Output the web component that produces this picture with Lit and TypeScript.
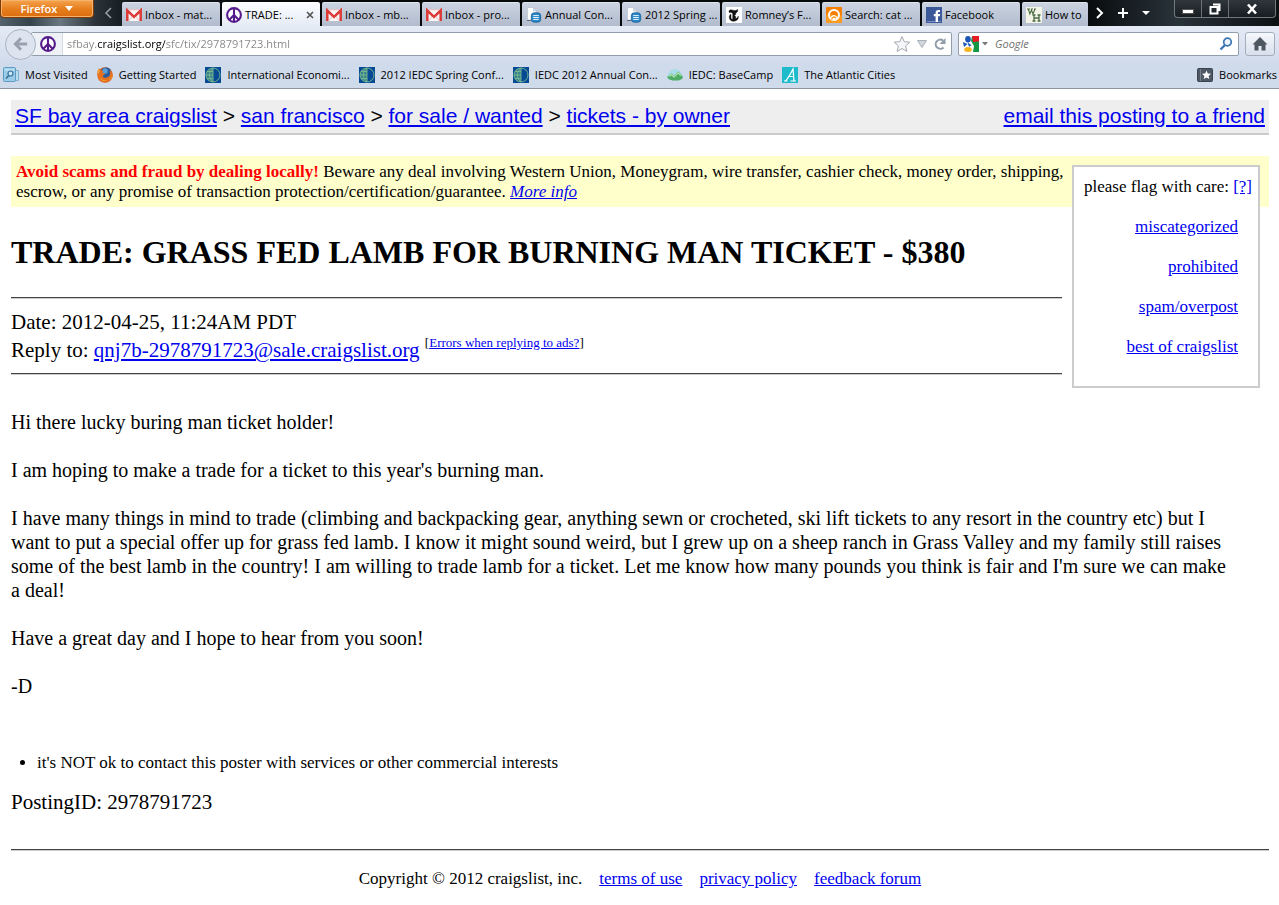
import { LitElement, html, css, svg, TemplateResult } from "lit";
import { customElement } from "lit/decorators.js";
import { classMap } from "lit/directives/class-map.js";

const icon = (body: unknown, size = 16) =>
  html`<svg class="icon" width=${size} height=${size} viewBox="0 0 16 16" aria-hidden="true">${body}</svg>`;

const gmail = icon(svg`<rect x="1" y="2.500" width="14" height="11.500" fill="#fdf6f5"/>
  <path d="M3 13.500 6.500 9M13 13.500 9.500 9" stroke="#d8b9b9" stroke-width=".8"/>
  <path d="M1.300 14V3.500L8 9.800l6.700-6.300V14" fill="none" stroke="#db3a37" stroke-width="2.500"/>
  <path d="M2.500 2.700h11" stroke="#edb2af" stroke-width=".8"/>`);
const peace = icon(svg`<circle cx="8" cy="8" r="6.900" fill="#fff" stroke="#551a8b" stroke-width="2.100"/>
  <path d="M8 1v14M8 8l-4.900 4.900M8 8l4.900 4.900" stroke="#551a8b" stroke-width="2.100" fill="none"/>`);
const docs = icon(svg`<path d="M1.500.5h6l3 3.500v9h-9z" fill="#fff" stroke="#c3ccd8"/>
  <path d="M7.500.5V4h3z" fill="#d9e0e8" stroke="#b5c0ce" stroke-width=".6"/><path d="M1 13.500h4" stroke="#5b6a7c"/>
  <rect x="5.300" y="5.800" width="9.400" height="9.400" rx="3" fill="#2a86c4" stroke="#155f99" stroke-width=".8"/>
  <path d="M7.200 8.600h5.600M7.200 10.500h5.600M7.200 12.400h5.600" stroke="#e5f4ff"/>`);
const nyt = icon(svg`<rect width="16" height="16" fill="#fff"/>
  <path d="M3.500 3.300c1.500-1.700 3.900.6 6 .2 1-.2 1.800-.7 2-1.300.7 1.900-.2 3.300-1.800 3.700v1.800l-1.500.9 1.500.8v2.300c1.200-.3 2-1.200 2.600-2.600.5 3-1.500 5.200-4.500 5.200C4.800 14.300 3 12.200 3.300 9.500c.1-1 .7-1.900 1.700-2.300v4c.3.700.9 1.100 1.700 1.300V6.200C5.500 5.800 5 5 4.900 4.900c-.7.100-.8.600-.5 1.100C2.600 5.500 2.600 4.300 3.500 3.300z" fill="#111" stroke="#111" stroke-width=".4"/>`);
const groove = icon(svg`<rect width="16" height="16" rx="1" fill="#f77f00"/>
  <path d="M0 8c5-3 11 3 16 0v7q0 1-1 1H1q-1 0-1-1z" fill="#ff9b22"/>
  <circle cx="8" cy="8" r="5" fill="none" stroke="#fff" stroke-width="2"/>
  <path d="M4 11.500c1.500-4 5-5 8-.5l-1.500 2h-5z" fill="#fff"/>
  <path d="M5.500 12.500c.8-2.500 2.500-3.500 4.500-1.300" fill="none" stroke="#ff9b22" stroke-width="1.300"/>`);
const facebook = icon(svg`<rect width="16" height="16" fill="#3b5998"/><path d="M1 14.500h14" stroke="#7690c5"/>
  <path d="M14 3h-1.700c-1.800 0-2.700 1-2.700 2.700V7H7.800v2.200h1.800V15H12V9.200h1.800L14.200 7H12V6c0-.6.300-1 1-1h1z" fill="#fff"/>`);
const wikihow = icon(svg`<rect width="16" height="16" fill="#f3f5e9"/>
  <path d="M1 2h3M5 2h2M8 2h2M2.300 2l1.600 5 1.600-4 1.500 4L9 2" fill="none" stroke="#4c6b43" stroke-width="1.100"/>
  <path d="M6.500 8h3M11.500 8h3M6.500 14h3M11.500 14h3M8 8v6M13 8v6M8 11h5" fill="none" stroke="#4c6b43" stroke-width="1.300"/>`);
const visited = icon(svg`<path d="M4 3.500h11.500v10H4z" fill="#b9dcef" stroke="#7db2d2"/>
  <rect x=".5" y=".5" width="12" height="14" rx="1" fill="#9bcbe6" stroke="#5b9bc4"/>
  <rect x="1.500" y="1.500" width="10" height="2.500" fill="#b7dcf0"/>
  <circle cx="7.500" cy="6.500" r="2.500" fill="#c9e6f5" stroke="#34739d" stroke-width="1.200"/>
  <path d="M5.700 8.600 3 11.500" stroke="#34739d" stroke-width="1.700"/>`);
const firefox = icon(svg`<circle cx="8" cy="8" r="7.700" fill="#dd5f18"/>
  <path d="M4 3c2-3 7-3.300 9.500-.5 1.500 2 1.500 5.500-.5 7.500-2.500 1.500-6 1.500-7.500-.5z" fill="#2b5c9e"/>
  <circle cx="8" cy="4" r="2.700" fill="#5a9fd6"/>
  <path d="M.4 4.500 2 1.300l1.200 2c1.500-.4 2.500 0 3 .6L5.200 5.700l2.900.9C7.700 8 6 8 5.600 9.200c1 2 4 2 6.300 0 1.500-1.500 1.500-4.500.6-6.500 3.500 2 3.800 6 2.300 9-3 4.500-10.500 4.500-13.500.5z" fill="#e5701d"/>
  <path d="M15.500 6c.3 5-2.800 8-6.900 7.800-3-.1-5-1.700-6-3.700 1 4 6.500 5.400 10 2.400 2-1.700 3-4 2.900-6.500z" fill="#fbc745"/>
  <path d="m.4 5 1.500-3L3 4.100 1.300 7z" fill="#f3a536"/>`);
const globe = icon(svg`<rect width="16" height="16" fill="#064a94"/><path d="M8 1a7 7 0 0 0 0 14z" fill="#37818a"/>
  <path d="M8 1a7 7 0 1 0 0 14M8 1a7 7 0 1 1 0 14M8 1C3.200 5 3.200 11 8 15M1 8h7M2 4.500h6M2 11.500h6M8 1v14" fill="none" stroke="#7cba90" stroke-width=".9"/>`);
const basecamp = icon(svg`<path d="M0 11C.3 6 4 2 8 2s7.700 4 8 9z" fill="#a9dcea"/>
  <path d="M.3 10 4.500 6.500 7 8.800l4.500-4.300 4.200 5.200c1.200 5-14.800 5.300-15.400.3z" fill="#4eac67"/>
  <path d="m2 9.300 2.600-1.500L7 10l4.500-4.200 2.300 3" fill="none" stroke="#b7e4af" stroke-width="1.100"/>`);
const atlantic = icon(svg`<rect width="16" height="16" fill="#1ebccb"/>
  <path d="M2 14h3.500M8.500 14H14M3.500 14c3-3 5.500-8 7.500-12l1 12M6 9.500h5.500" fill="none" stroke="#fff" stroke-width="1.200"/>`);
const google = icon(svg`<path d="M7 0h9v16H7z" fill="#149846"/><path d="M9 0h7v5.500L10 6z" fill="#e71b23"/>
  <path d="M0 0h9l-1 5 3 5-1 6H0z" fill="#fff"/><ellipse cx="5" cy="3.200" rx="2.800" ry="3.200" fill="#1b55b5"/>
  <path d="m0 6 4.500 2L1 11z" fill="#1b55b5"/><path d="m4.500 6.300 4 3-2.500 1.500z" fill="#1b55b5"/>
  <ellipse cx="5" cy="13.400" rx="3.800" ry="2.500" fill="#f6b51a"/>`);
const starBox = icon(svg`<rect x=".5" y="1.500" width="15" height="13" rx="1" fill="#4f5966" stroke="#39424d"/>
  <path d="M3.500 2v12" stroke="#77818e"/>
  <path d="m9.500 3.500 1.300 3 3.200.3-2.400 2.100.7 3.200-2.800-1.700-2.800 1.700.7-3.200L5 6.800l3.200-.3z" fill="#fff"/>`);

const tabs: { label: string; icon: TemplateResult; active?: boolean; cut?: boolean }[] = [
  { label: "Inbox - mat...", icon: gmail },
  { label: "TRADE: ...", icon: peace, active: true },
  { label: "Inbox - mb...", icon: gmail },
  { label: "Inbox - pro...", icon: gmail },
  { label: "Annual Con...", icon: docs },
  { label: "2012 Spring ...", icon: docs },
  { label: "Romney’s F...", icon: nyt },
  { label: "Search: cat ...", icon: groove },
  { label: "Facebook", icon: facebook },
  { label: "How to", icon: wikihow, cut: true },
];

const bookmarks = [
  { label: "Most Visited", icon: visited },
  { label: "Getting Started", icon: firefox },
  { label: "International Economi...", icon: globe },
  { label: "2012 IEDC Spring Conf...", icon: globe },
  { label: "IEDC 2012 Annual Con...", icon: globe },
  { label: "IEDC: BaseCamp", icon: basecamp },
  { label: "The Atlantic Cities", icon: atlantic },
];

@customElement("browser-chrome")
export class BrowserChrome extends LitElement {
  static styles = css`
    :host { display: block; font: 11px/16px "Open Sans", "Noto Sans", sans-serif; color: #000; }
    button, input { font: inherit; color: inherit; padding: 0; margin: 0; border: 0; background: none; }
    svg { display: block; flex: none; }
    .titlebar {
      display: flex; height: 26px; overflow: hidden;
      background: linear-gradient(90deg, #55636e 0, #34424c 30px, #6b7881 60px, #2b343a 95px, #151b1f 125px, #050708 300px, #080b0d 85%, #29333a 92%, #0b1012);
    }
    .menu {
      box-sizing: border-box; width: 94px; height: 18px; flex: none; display: flex; gap: 8px; align-items: center; justify-content: center;
      color: #fff; font-weight: 600; border: 1px solid #7d3a08; border-top: 0; border-radius: 0 0 4px 4px;
      background: linear-gradient(#f5a450, #e57d1c 55%, #dc6d10); box-shadow: inset 0 0 0 1px #f6b36c;
    }
    .scroll { width: 28px; flex: none; display: grid; place-items: center; }
    .tabs { display: flex; gap: 2px; padding-top: 2px; flex: none; }
    .tab {
      box-sizing: border-box; width: 98px; height: 24px; display: flex; align-items: center; padding: 0 4px; overflow: hidden;
      background: linear-gradient(#cbd3e1, #b2bccd); border-top: 1px solid #dfe5ef; border-radius: 2px 2px 0 0;
    }
    .tab.active { background: linear-gradient(#fbfcfe, #e5ebf5); border-color: #fff; }
    .tab.cut { width: 66px; }
    .pick { display: flex; align-items: center; gap: 3px; flex: 1; white-space: nowrap; }
    .close { flex: none; width: 12px; height: 12px; }
    .actions { display: flex; align-items: center; gap: 11px; padding-left: 6px; }
    .window { display: flex; height: 18px; margin-left: auto; margin-right: 3px; border: 1px solid #71797e; border-top: 0; border-radius: 0 0 4px 4px; box-sizing: border-box;
      background: linear-gradient(#30373c, #171d21); }
    .window button { width: 27px; display: grid; place-items: center; border-right: 1px solid #6b7378; }
    .window button:last-child { width: 46px; border: 0; }
    .nav { display: flex; align-items: center; height: 36px; padding: 0 4px 0 5px; background: linear-gradient(#e5ebf5, #d2dced); }
    .back {
      box-sizing: border-box; width: 31px; height: 31px; flex: none; border: 1px solid #a9b3c2; border-radius: 50%; display: grid; place-items: center;
      background: #dde4ef; margin-right: -5px; z-index: 1;
    }
    .field { box-sizing: border-box; height: 24px; display: flex; align-items: center; background: #fff; border: 1px solid #929dab; border-radius: 2px; }
    .address { flex: 1; padding-right: 4px; gap: 6px; }
    .site { align-self: stretch; width: 31px; display: grid; place-items: center; padding-left: 2px; box-sizing: border-box; background: #eef1f6; border-right: 1px solid #d4dae3; }
    .url {
      flex: 1; min-width: 0; outline: 0; color: transparent; margin-left: -2px;
      background: linear-gradient(90deg, #858585 31px, #000 31px, #000 98px, #858585 98px); -webkit-background-clip: text; background-clip: text;
    }
    .search { width: 281px; margin: 0 6px; padding: 0 5px 0 4px; gap: 3px; }
    .search input { flex: 1; min-width: 0; outline: 0; font-style: italic; margin-left: 4px; }
    .search input::placeholder { color: #707070; opacity: 1; }
    .home { box-sizing: border-box; width: 30px; height: 24px; flex: none; display: grid; place-items: center; border: 1px solid #a4aebc; border-radius: 3px; background: linear-gradient(#f5f8fc, #d8e0ec); }
    .bookmarks { display: flex; align-items: center; height: 27px; box-sizing: border-box; padding: 0 2px 0 3px; gap: 9px; background: #cfdaea; border-bottom: 1px solid #8f959d; }
    .bookmarks button { display: flex; align-items: center; gap: 6px; white-space: nowrap; }
    .bookmarks .last { margin-left: auto; }
  `;

  render() {
    return html`
      <div class="titlebar">
        <button class="menu">Firefox <svg width="8" height="5" viewBox="0 0 8 5"><path d="M0 0h8L4 5z" fill="#fff" /></svg></button>
        <button class="scroll" aria-label="Scroll tabs left"><svg width="8" height="12" viewBox="0 0 8 12"><path d="M7 1 2 6l5 5" fill="none" stroke="#9aa2a8" stroke-width="1.500" /></svg></button>
        <div class="tabs">
          ${tabs.map((t) => html`<div class=${classMap({ tab: true, active: !!t.active, cut: !!t.cut })}>
            <button class="pick">${t.icon}<span>${t.label}</span></button>
            ${t.active ? html`<button class="close" aria-label="Close tab"><svg width="12" height="12" viewBox="0 0 12 12"><path d="m3 3 6 6M9 3 3 9" stroke="#555" stroke-width="1.700" /></svg></button>` : ""}
          </div>`)}
        </div>
        <div class="actions">
          <button aria-label="Scroll tabs right"><svg width="12" height="14" viewBox="0 0 12 14"><path d="m3 2 5 5-5 5" fill="none" stroke="#fff" stroke-width="2" /></svg></button>
          <button aria-label="New tab"><svg width="12" height="12" viewBox="0 0 12 12"><path d="M6 1v10M1 6h10" stroke="#fff" stroke-width="2" /></svg></button>
          <button aria-label="List all tabs"><svg width="12" height="5" viewBox="0 0 12 5"><path d="M2 0h8L6 4z" fill="#fff" /></svg></button>
        </div>
        <div class="window">
          <button aria-label="Minimize"><svg width="12" height="12" viewBox="0 0 12 12"><path d="M.5 6.500h11v4H.5z" fill="#fff" stroke="#555" /></svg></button>
          <button aria-label="Restore"><svg width="12" height="12" viewBox="0 0 12 12"><path d="M4 1.500h6.500V8M1.500 4h7v6.500h-7z" fill="none" stroke="#fff" stroke-width="2" /></svg></button>
          <button aria-label="Close window"><svg width="12" height="12" viewBox="0 0 12 12"><path d="m2 1.500 8 9m0-9-8 9" stroke="#fff" stroke-width="2.600" /></svg></button>
        </div>
      </div>
      <div class="nav">
        <button class="back" aria-label="Back"><svg width="16" height="14" viewBox="0 0 18 16"><path d="M9 1.500 2.500 8 9 14.500M3 8h13" fill="none" stroke="#98a1ad" stroke-width="3.200" /></svg></button>
        <div class="field address">
          <span class="site">${peace}</span>
          <input class="url" aria-label="Address" .value=${"sfbay.craigslist.org/sfc/tix/2978791723.html"} />
          <button aria-label="Bookmark this page"><svg width="18" height="18" viewBox="0 0 18 18"><path d="m9 1.500 2.200 5.200 5.600.5-4.200 3.700 1.300 5.500L9 13.500l-4.900 2.900 1.300-5.500L1.200 7.200l5.600-.5z" fill="#f5f6f8" stroke="#a4a9b0" /></svg></button>
          <button aria-label="History"><svg width="10" height="8" viewBox="0 0 10 8"><path d="M.5.500h9L5 7.500z" fill="#d3d8df" stroke="#a9b0ba" /></svg></button>
          <button aria-label="Reload"><svg width="14" height="14" viewBox="0 0 14 14"><path d="M10.500 10.500A4.600 4.600 0 1 1 10 3.500" fill="none" stroke="#919ba7" stroke-width="2" /><path d="M12.500 1v6h-6z" fill="#919ba7" /></svg></button>
        </div>
        <div class="field search">
          ${google}<svg width="6" height="4" viewBox="0 0 6 4"><path d="M0 0h6L3 3.500z" fill="#777" /></svg>
          <input type="text" placeholder="Google" aria-label="Search with Google" />
          <button aria-label="Search"><svg width="14" height="14" viewBox="0 0 14 14"><circle cx="8.500" cy="5" r="3.800" fill="#eef6fd" stroke="#3b77b5" stroke-width="1.700" /><path d="M6 8 1.500 12.500" stroke="#3b77b5" stroke-width="2.400" /></svg></button>
        </div>
        <button class="home" aria-label="Home"><svg width="16" height="14" viewBox="0 0 16 14"><path d="M8 0 .5 7.500h2V13.500h4V9h3v4.500h4v-6h2z" fill="#4d565f" /></svg></button>
      </div>
      <div class="bookmarks">
        ${bookmarks.map((b) => html`<button>${b.icon}<span>${b.label}</span></button>`)}
        <button class="last">${starBox}<span>Bookmarks</span></button>
      </div>`;
  }
}

@customElement("app-root")
export class AppRoot extends LitElement {
  static styles = css`
    :host { display: block; min-height: 100vh; background: #fff; color: #000; font: 20px/24px "Liberation Serif", "Times New Roman", serif; }
    a { color: #00e; }
    p, h1, ul { margin: 0; }
    .page { padding: 11px 10px 16px 11px; }
    .crumbs {
      display: flex; justify-content: space-between; height: 33px; padding: 0 4px; background: #eee; border-bottom: 2px solid #ccc;
      font: 21px/32px "Liberation Sans", Arial, sans-serif; margin-bottom: 21px;
    }
    .flags {
      float: right; box-sizing: border-box; width: 188px; height: 223px; margin: 9px 9px 10px 4px; padding: 10px;
      border: 2px solid #ccc; background: #fff; font-size: 17px; line-height: 20px; white-space: nowrap;
    }
    .flags ul { list-style: none; padding: 20px 10px 0 0; display: grid; gap: 20px; justify-items: end; }
    .warning { background: #ffc; padding: 6px 0 5px 5px; font-size: 17px; line-height: 20px; }
    .warning b { color: #f00; }
    .heading { display: flow-root; padding-right: 6px; }
    h1 { font-size: 32px; line-height: 36px; padding: 27px 0; }
    hr { margin: 0; height: 2px; border: 0; overflow: hidden; background: linear-gradient(#444 50%, #ccc 50%); }
    .meta { padding: 9px 0; font-size: 21px; line-height: 28px; }
    .meta sup { font-size: 13px; line-height: 0; vertical-align: 10px; }
    .body { padding: 35px 32px 31px 0; }
    .body p { margin-bottom: 24px; }
    .terms { padding-left: 26px; font-size: 17px; line-height: 20px; }
    .posting { padding: 17px 0 35px; font-size: 21px; }
    footer { display: flex; justify-content: center; gap: 17px; padding-top: 18px; font-size: 17px; line-height: 20px; }
  `;

  render() {
    return html`
      <browser-chrome></browser-chrome>
      <main class="page">
        <nav class="crumbs">
          <span><a href="#">SF bay area craigslist</a> &gt; <a href="#">san francisco</a> &gt; <a href="#">for sale / wanted</a> &gt; <a href="#">tickets - by owner</a></span>
          <a href="#">email this posting to a friend</a>
        </nav>
        <aside class="flags">
          please flag with care: <a href="#">[?]</a>
          <ul>
            <li><a href="#">miscategorized</a></li>
            <li><a href="#">prohibited</a></li>
            <li><a href="#">spam/overpost</a></li>
            <li><a href="#">best of craigslist</a></li>
          </ul>
        </aside>
        <div class="warning">
          <b>Avoid scams and fraud by dealing locally!</b> Beware any deal involving Western Union, Moneygram, wire transfer, cashier check, money order, shipping, escrow, or any promise of transaction protection/certification/guarantee. <a href="#"><i>More info</i></a>
        </div>
        <header class="heading">
          <h1>TRADE: GRASS FED LAMB FOR BURNING MAN TICKET - $380</h1>
          <hr />
          <div class="meta">
            Date: 2012-04-25, 11:24AM PDT<br />
            Reply to: <a href="#">qnj7b-2978791723@sale.craigslist.org</a> <sup>[<a href="#">Errors when replying to ads?</a>]</sup>
          </div>
          <hr />
        </header>
        <div class="body">
          <p>Hi there lucky buring man ticket holder!</p>
          <p>I am hoping to make a trade for a ticket to this year's burning man.</p>
          <p>I have many things in mind to trade (climbing and backpacking gear, anything sewn or crocheted, ski lift tickets to any resort in the country etc) but I want to put a special offer up for grass fed lamb. I know it might sound weird, but I grew up on a sheep ranch in Grass Valley and my family still raises some of the best lamb in the country! I am willing to trade lamb for a ticket. Let me know how many pounds you think is fair and I'm sure we can make a deal!</p>
          <p>Have a great day and I hope to hear from you soon!</p>
          <p>-D</p>
        </div>
        <ul class="terms"><li>it's NOT ok to contact this poster with services or other commercial interests</li></ul>
        <p class="posting">PostingID: 2978791723</p>
        <hr />
        <footer>
          <span>Copyright © 2012 craigslist, inc.</span>
          <a href="#">terms of use</a><a href="#">privacy policy</a><a href="#">feedback forum</a>
        </footer>
      </main>`;
  }
}
